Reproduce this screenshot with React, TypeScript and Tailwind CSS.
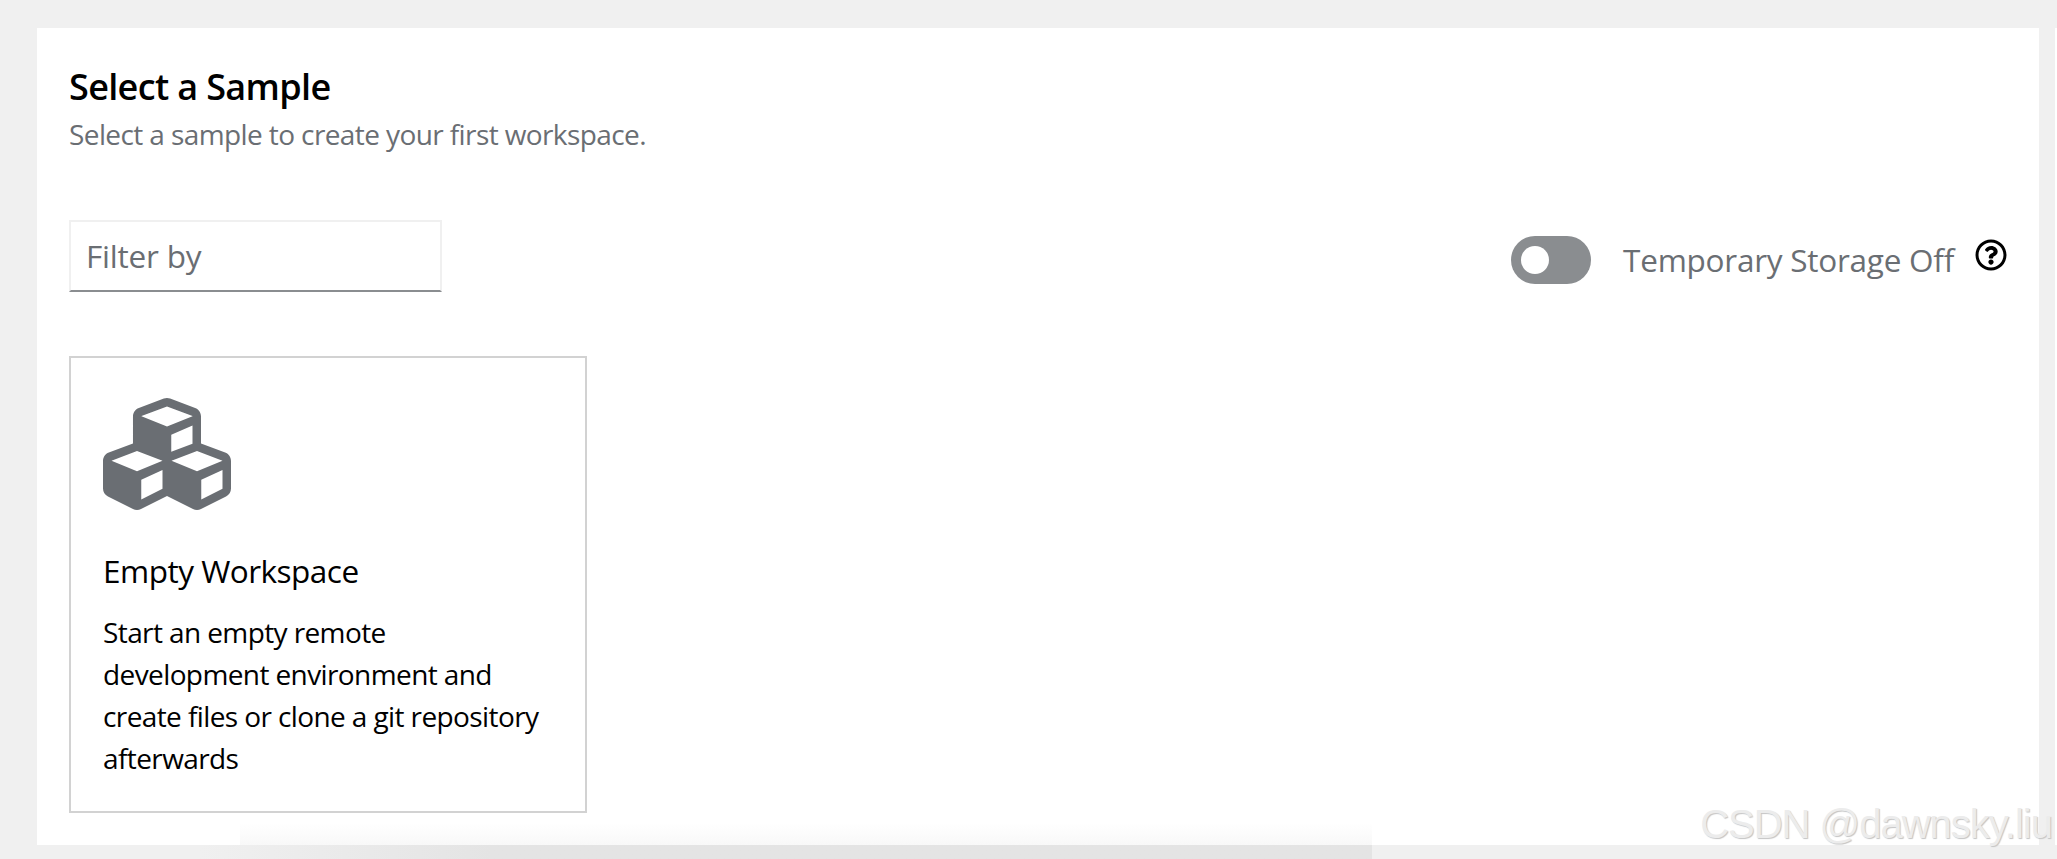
import { FaCubes, FaRegQuestionCircle } from "react-icons/fa";

export default function App() {
  return (
    <div className="relative h-[859px] w-[2057px] overflow-hidden bg-[#f0f0f0] font-['Open_Sans',sans-serif]">
      <div className="ml-[37px] flex h-[845px] w-[2002px] flex-col pt-[28px]">
        <main className="flex h-[817px] flex-col bg-white pl-[32px] pr-[32px]">
          <h1 className="mt-[34px] text-[36px] leading-[50px] font-semibold tracking-[-0.65px] text-black">Select a Sample</h1>
          <p className="mt-[1px] text-[28px] leading-[42px] tracking-[-0.6px] text-[#6a6e73]">Select a sample to create your first workspace.</p>
          <div className="mt-[65px] flex items-start justify-between">
            <input
              placeholder="Filter by"
              className="h-[72px] w-[373px] border-2 border-[#f0f0f0] border-b-[#8a8d90] bg-white px-[15px] pb-[2px] text-[31.5px] tracking-[-0.2px] outline-none placeholder:text-[#6a6e73]"
            />
            <div className="mt-[16px] flex items-center">
              <span className="flex h-[48px] w-[80px] items-center rounded-full bg-[#8a8d90] pl-[10px]">
                <span className="size-[28px] rounded-full bg-white" />
              </span>
              <span className="ml-[32px] text-[31.5px] leading-[46px] tracking-[-0.25px] text-[#6a6e73]">Temporary Storage Off</span>
              <FaRegQuestionCircle className="mb-[10px] ml-[21px] size-[32px] text-black" />
            </div>
          </div>
          <article className="mt-[64px] flex h-[457px] w-[518px] flex-col border-2 border-[#d2d2d2] px-[32px] pt-[32px]">
            <FaCubes className="size-[128px] text-[#6a6e73]" />
            <h2 className="mt-[29px] text-[31.5px] leading-[47px] tracking-[-0.5px] text-black">Empty Workspace</h2>
            <p className="mt-[17px] text-[28px] leading-[42px] tracking-[-0.6px] text-black">
              Start an empty remote development environment and create files or clone a git repository afterwards
            </p>
          </article>
        </main>
      </div>
      <div className="absolute bottom-[14px] left-[240px] h-[22px] w-[1132px] bg-gradient-to-b from-transparent to-[#f8f8f8]" />
      <div className="absolute bottom-0 left-[200px] h-[14px] w-[1172px] bg-gradient-to-r from-[#f0f0f0] to-[#e4e4e4] to-[25%]" />
      <div className="absolute right-0 top-[28px] h-[817px] w-[2px] bg-white" />
      <div className="absolute bottom-[12px] right-[5px] font-['Liberation_Sans',sans-serif] text-[40px] leading-[46px] tracking-[-1px] text-[#ececec] [text-shadow:1px_1px_1px_#c4c4c4]">CSDN @dawnsky.liu</div>
    </div>
  );
}
